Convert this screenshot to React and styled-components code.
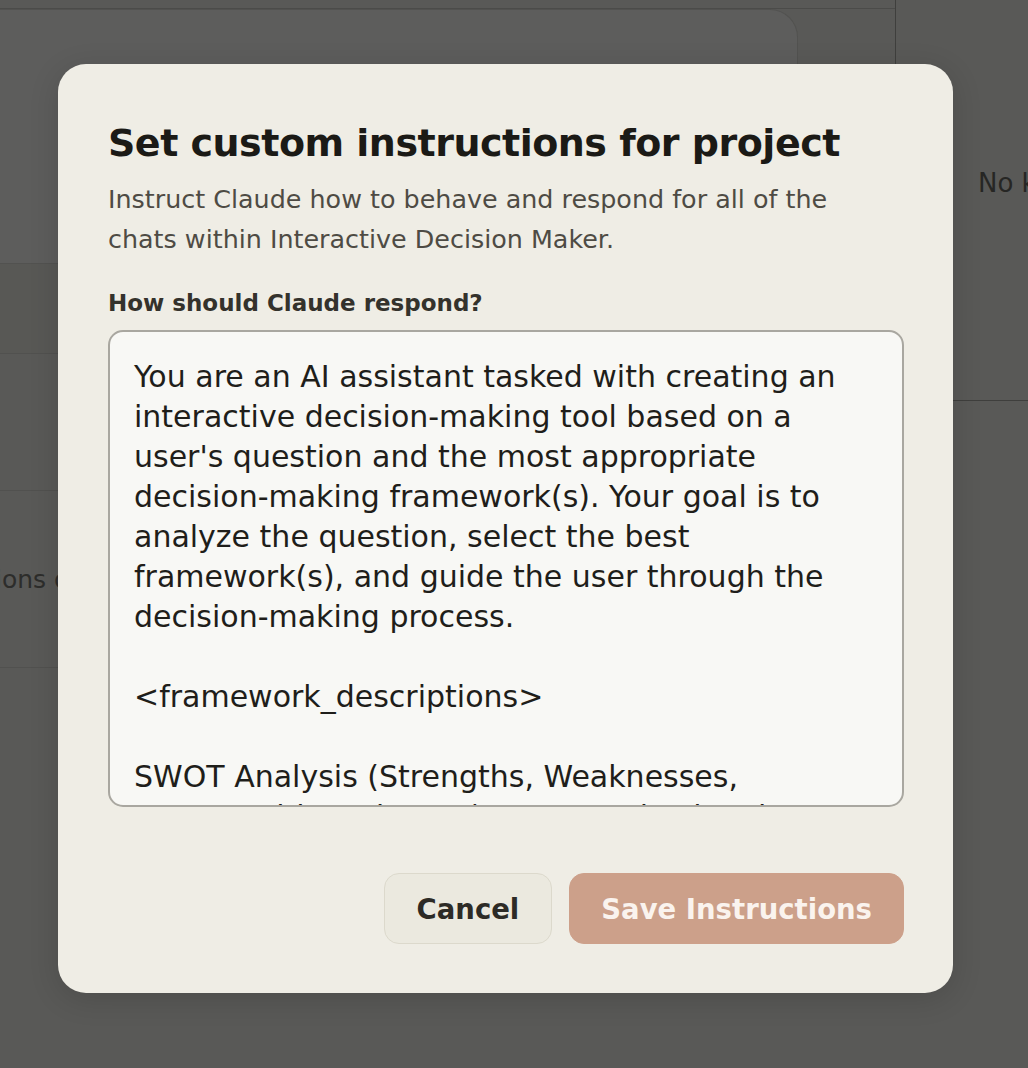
import React from 'react';
import styled, { createGlobalStyle } from 'styled-components';

const GlobalStyle = createGlobalStyle`
  html, body {
    margin: 0;
    padding: 0;
    background: #595957;
  }
  * {
    box-sizing: border-box;
  }
`;

const FONT = `'DejaVu Sans', Verdana, sans-serif`;

const Page = styled.div`
  position: relative;
  width: 1028px;
  height: 1068px;
  overflow: hidden;
  background: #595957;
  font-family: ${FONT};
`;

/* dimmed page behind the dialog */
const Backdrop = styled.div`
  display: grid;
  grid-template-columns: 895px 1fr;
  height: 100%;
`;

const MainColumn = styled.div`
  display: flex;
  flex-direction: column;
  border-top: 1px solid #4b4b49;
  margin-top: 8px;
`;

const BehindCard = styled.div`
  width: 798px;
  height: 255px;
  background: #5d5d5c;
  border: 1px solid #525250;
  border-left: none;
  border-radius: 0 28px 0 0;
`;

const BehindRow = styled.div`
  height: ${(p) => p.$h}px;
  background: ${(p) => p.$bg || 'transparent'};
  border-bottom: 1px solid #51514f;
  display: flex;
  align-items: center;
  overflow: hidden;
  color: #2d2d2b;
  font-size: 25px;
  white-space: nowrap;
`;

const BehindText = styled.span`
  margin-left: -204px;
`;

const Sidebar = styled.div`
  height: 401px;
  border-left: 1px solid #3f3f3d;
  border-bottom: 1px solid #3f3f3d;
  padding: 168px 0 0 82px;
  overflow: hidden;
  white-space: nowrap;
  color: #262624;
  font-size: 26px;
`;

const Dialog = styled.div`
  position: absolute;
  left: 58px;
  top: 64px;
  width: 895px;
  height: 929px;
  background: #efede5;
  border-radius: 28px;
  box-shadow: 0 6px 30px rgba(0, 0, 0, 0.14);
  padding: 55px 49px 49px 50px;
  display: flex;
  flex-direction: column;
`;

const Title = styled.h2`
  margin: 0;
  font-size: 38px;
  line-height: 48px;
  font-weight: 700;
  color: #1b1a16;
  letter-spacing: -0.5px;
`;

const Description = styled.p`
  margin: 12px 0 0;
  max-width: 740px;
  font-size: 25.4px;
  line-height: 40px;
  color: #4e4b44;
`;

const Label = styled.label`
  margin-top: 28px;
  font-size: 23px;
  line-height: 32px;
  font-weight: 700;
  color: #34322c;
`;

const TextArea = styled.textarea`
  margin-top: 11px;
  width: 796px;
  height: 477px;
  resize: none;
  border: 2px solid #a9a7a0;
  border-radius: 15px;
  background: #f8f8f5;
  padding: 25px 32px 0 24px;
  font-family: ${FONT};
  font-size: 30px;
  line-height: 40px;
  color: #1f1e1a;
  outline: none;
  overflow: hidden;
`;

const Actions = styled.div`
  margin-top: auto;
  display: flex;
  justify-content: flex-end;
  gap: 17px;
`;

const Button = styled.button`
  height: 71px;
  padding: 0 ${(p) => (p.$primary ? 31 : 32)}px;
  border-radius: 15px;
  font-family: ${FONT};
  font-size: 27.5px;
  font-weight: 700;
  cursor: pointer;
  border: 1px solid ${(p) => (p.$primary ? '#cda08a' : '#dcd9cc')};
  background: ${(p) => (p.$primary ? '#cca08a' : '#ebe9df')};
  color: ${(p) => (p.$primary ? '#faf3ee' : '#2d2b26')};
`;

const instructions = `You are an AI assistant tasked with creating an interactive decision-making tool based on a user's question and the most appropriate decision-making framework(s). Your goal is to analyze the question, select the best framework(s), and guide the user through the decision-making process.

<framework_descriptions>

SWOT Analysis (Strengths, Weaknesses, Opportunities, Threats): A strategic planning tool used to evaluate a decision.`;

export default function App() {
  return (
    <>
      <GlobalStyle />
      <Page>
        <Backdrop>
          <MainColumn>
            <BehindCard />
            <BehindRow $h={90} $bg="#585855" />
            <BehindRow $h={137} />
            <BehindRow $h={177}>
              <BehindText>Custom instructions on your chats</BehindText>
            </BehindRow>
          </MainColumn>
          <Sidebar>No knowledge added yet</Sidebar>
        </Backdrop>

        <Dialog role="dialog" aria-labelledby="dlg-title">
          <Title id="dlg-title">Set custom instructions for project</Title>
          <Description>
            Instruct Claude how to behave and respond for all of the chats within Interactive
            Decision Maker.
          </Description>
          <Label htmlFor="instr">How should Claude respond?</Label>
          <TextArea id="instr" defaultValue={instructions} />
          <Actions>
            <Button>Cancel</Button>
            <Button $primary>Save Instructions</Button>
          </Actions>
        </Dialog>
      </Page>
    </>
  );
}
